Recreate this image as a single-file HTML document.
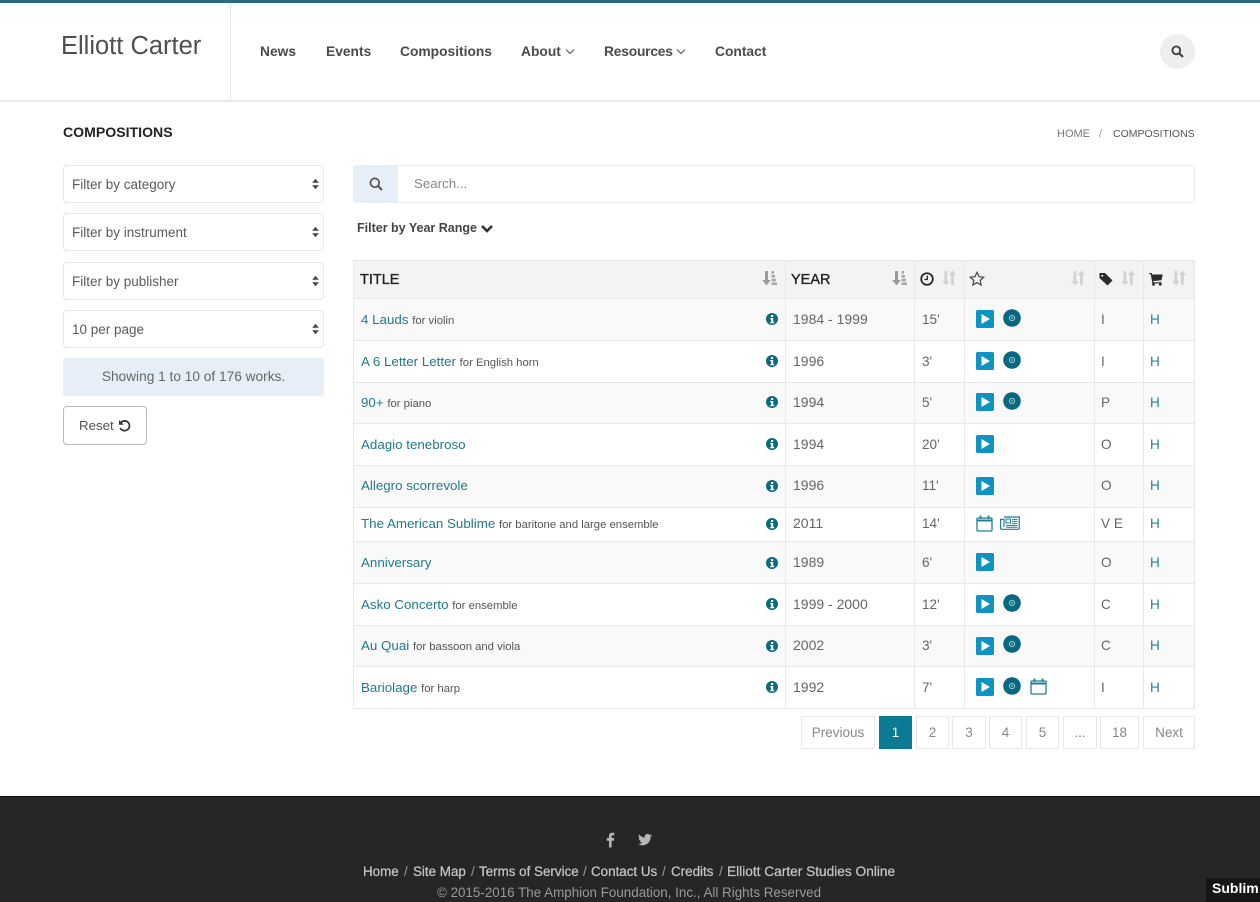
<!DOCTYPE html>
<html lang="en"><head><meta charset="utf-8"><title>Compositions</title>
<style>
html,body{margin:0;padding:0;background:#fff}
body{width:1260px;height:902px;overflow:hidden;position:relative}
#w{position:absolute;left:0;top:0;width:1260px;height:902px;overflow:hidden;background:#fff;font-family:"Liberation Sans",Arial,sans-serif;color:#555;filter:blur(.3px)}
.a,.t,.i{position:absolute}
.t{white-space:nowrap;line-height:20px;height:20px;margin-top:1px}
a{color:#1f7a8c;text-decoration:none}
.nav{font-weight:bold;font-size:13.8px;color:#4a4a4a;top:41px}
.box{position:absolute;box-sizing:border-box;border:1px solid #e6e6e6;border-radius:4px;background:#fff}
.sel{left:63px;width:261px;height:38px}
.sel .t{left:8px;top:8px;font-size:13.5px;color:#5a5a5a}
.sel svg{position:absolute;left:248px;top:12px}
.hl{position:absolute;left:353px;width:842px;height:1px;background:#e8e8e8}
.vl{position:absolute;top:260px;width:1px;height:449px;background:#e8e8e8}
.st{position:absolute;left:354px;width:840px}
.l{left:361px;font-size:13.35px;color:#777}
.l a{color:#1f7a8c}.l span{font-size:11.3px;color:#555}
.y{left:793px;font-size:14px;color:#666;margin-top:0}
.d{left:922px;font-size:13.6px;color:#666}
.c{left:1101px;font-size:13.6px;color:#666}
.h{left:1150px;font-size:13.6px;color:#2a8296}
.th{font-size:14.5px;color:#222;-webkit-text-stroke:.35px #222;top:269px}
.pg{position:absolute;top:716px;height:33px;box-sizing:border-box;border:1px solid #e8e8e8;text-align:center;line-height:31px;font-size:13.5px;color:#888;background:#fff}
.i{display:block}
.f{top:861px;font-size:13.4px;color:#c4c4c4;-webkit-text-stroke:.25px #c4c4c4}
.s{top:861px;font-size:13.4px;color:#999}
</style></head><body><div id="w">
<svg width="0" height="0" style="position:absolute">
<defs>
<symbol id="play" viewBox="0 0 18 18"><rect width="18" height="18" rx="1.6" fill="#0f93c3"/><path d="M5.500 4 14 9 5.500 14Z" fill="#fff"/></symbol>
<symbol id="disc" viewBox="0 0 18 18"><circle cx="9" cy="9" r="8.8" fill="#07697e"/><circle cx="9" cy="9" r="2.6" fill="none" stroke="#9fc6cf" stroke-width="1"/><circle cx="9" cy="9" r=".9" fill="#9fc6cf"/></symbol>
<symbol id="info" viewBox="0 0 12 12"><circle cx="6" cy="6" r="6" fill="#0b6b80"/><rect x="5" y="2" width="2.2" height="2" fill="#fff"/><path d="M4.200 5h3v4h1v1.200H4.200V9h1V6.200h-1Z" fill="#fff"/></symbol>
<symbol id="cal" viewBox="0 0 17 17"><rect x="1" y="3" width="15" height="13" rx="1" fill="none" stroke="#1f7f93" stroke-width="1.300"/><path d="M1 5.500h15" stroke="#1f7f93" stroke-width="2"/><path d="M4.500 .5v3.400M12.500 .5v3.400" stroke="#1f7f93" stroke-width="1.800"/></symbol>
<symbol id="news" viewBox="0 0 20 14"><path d="M4 1h15.300v11a1.300 1.300 0 0 1-1.300 1.300H2a1.400 1.400 0 0 1-1.400-1.400V3.400H4V11" fill="none" stroke="#1f7f93" stroke-width="1.200"/><rect x="6" y="3" width="4.500" height="4" fill="none" stroke="#1f7f93"/><path d="M12 3.400h5.500M12 5.400h5.500M12 7.400h5.500M6 9.400h11.500M6 11.200h11.500" stroke="#1f7f93"/></symbol>
<symbol id="sa" viewBox="0 0 16 16"><path d="M4 1h3v9h2.800L5.500 15.500 1.200 10H4Z" fill="#9a9a9a"/><path d="M10.500 1h2.500v2.800h-2.500ZM10.500 5h3.500v2.500h-3.500ZM10.500 8.700h4.500v2.500h-4.500ZM10.500 12.400h5.500v2.600h-5.500Z" fill="#a8a8a8"/></symbol>
<symbol id="so" viewBox="0 0 16 16"><path d="M3.500 1h2.800v10h2.500L5 15.500 1.200 11h2.300Z" fill="#d2d2d2"/><path d="M10 15V5H7.600L11.400.5 15.200 5H12.800V15Z" fill="#d2d2d2"/></symbol>
<symbol id="sel" viewBox="0 0 7 12"><path d="M3.500 .8 6.800 4.800H.2ZM3.500 11.200.2 7.200H6.800Z" fill="#444"/></symbol>
</defs></svg>

<!-- header -->
<div class="a" style="left:0;top:0;width:1260px;height:3px;background:#2a6b7c"></div>
<div class="a" style="left:0;top:100px;width:1260px;height:2px;background:#e8e8e8"></div>
<div class="a" style="left:230px;top:3px;width:1px;height:97px;background:#e6e6e6"></div>
<div class="t" style="left:61px;top:35px;font-size:25.500px;color:#505050">Elliott Carter</div>
<div class="t nav" style="left:260px">News</div>
<div class="t nav" style="left:326px">Events</div>
<div class="t nav" style="left:400px">Compositions</div>
<div class="t nav" style="left:521px">About</div>
<svg class="i" style="left:565px;top:48px" width="10" height="7"><path d="M1 1.500 5 5.500 9 1.500" fill="none" stroke="#555" stroke-width="1.100"/></svg>
<div class="t nav" style="left:604px;letter-spacing:-.2px">Resources</div>
<svg class="i" style="left:676px;top:48px" width="10" height="7"><path d="M1 1.500 5 5.500 9 1.500" fill="none" stroke="#555" stroke-width="1.100"/></svg>
<div class="t nav" style="left:715px">Contact</div>
<div class="a" style="left:1160px;top:34px;width:35px;height:35px;border-radius:50%;background:#eee"></div>
<svg class="i" style="left:1171px;top:45px" width="13" height="13"><circle cx="5.300" cy="5.300" r="3.900" fill="none" stroke="#444" stroke-width="1.900"/><path d="M8.200 8.200 12 12" stroke="#444" stroke-width="2.200"/></svg>

<div class="t" style="left:63px;top:121px;font-size:14.100px;font-weight:bold;color:#222">COMPOSITIONS</div>
<div class="t" style="left:1057px;top:123px;font-size:11px;color:#777">HOME</div>
<div class="t" style="left:1099px;top:123px;font-size:11px;color:#999">/</div>
<div class="t" style="left:1113px;top:123px;font-size:10.500px;color:#555">COMPOSITIONS</div>

<!-- sidebar -->
<div class="box sel" style="top:165px"><div class="t">Filter by category</div><svg width="7" height="12"><use href="#sel"/></svg></div>
<div class="box sel" style="top:213px"><div class="t">Filter by instrument</div><svg width="7" height="12"><use href="#sel"/></svg></div>
<div class="box sel" style="top:262px"><div class="t">Filter by publisher</div><svg width="7" height="12"><use href="#sel"/></svg></div>
<div class="box sel" style="top:310px"><div class="t">10 per page</div><svg width="7" height="12"><use href="#sel"/></svg></div>
<div class="a" style="left:63px;top:358px;width:261px;height:38px;border-radius:3px;background:#e6eef7"></div>
<div class="t" style="left:63px;width:261px;text-align:center;top:366px;font-size:13.700px;color:#666">Showing 1 to 10 of 176 works.</div>
<div class="box" style="left:63px;top:406px;width:84px;height:39px;border-color:#bbb"></div>
<div class="t" style="left:79px;top:415px;font-size:13.300px;color:#555">Reset</div>
<svg class="i" style="left:118px;top:419px" width="13" height="13"><path d="M3 3.400A4.900 4.900 0 1 1 2.200 9" fill="none" stroke="#333" stroke-width="1.700"/><path d="M1 1v4.800h4.800Z" fill="#333"/></svg>

<!-- search -->
<div class="box" style="left:353px;top:165px;width:842px;height:38px;border-color:#ececec"></div>
<div class="a" style="left:353px;top:165px;width:45px;height:38px;background:#e6eef7;border-radius:4px 0 0 4px"></div>
<svg class="i" style="left:369px;top:177px" width="14" height="14"><circle cx="5.800" cy="5.800" r="4.400" fill="none" stroke="#555" stroke-width="1.700"/><path d="M9 9 13 13" stroke="#555" stroke-width="2"/></svg>
<div class="t" style="left:414px;top:173px;font-size:13.300px;color:#888">Search...</div>
<div class="t" style="left:357px;top:217px;font-size:12.500px;font-weight:bold;color:#444">Filter by Year Range</div>
<svg class="i" style="left:480px;top:224px" width="14" height="10"><path d="M2 2 7 7 12 2" fill="none" stroke="#333" stroke-width="2.600"/></svg>

<!-- table -->
<div class="a" style="left:354px;top:261px;width:840px;height:37px;background:#f3f3f3"></div>
<div class="st" style="top:299px;height:41px;background:#f9f9f9"></div>
<div class="st" style="top:383px;height:40px;background:#f9f9f9"></div>
<div class="st" style="top:466px;height:41px;background:#f9f9f9"></div>
<div class="st" style="top:542px;height:41px;background:#f9f9f9"></div>
<div class="st" style="top:626px;height:40px;background:#f9f9f9"></div>
<div class="hl" style="top:260px"></div><div class="hl" style="top:298px"></div><div class="hl" style="top:340px"></div><div class="hl" style="top:382px"></div><div class="hl" style="top:423px"></div><div class="hl" style="top:465px"></div><div class="hl" style="top:507px"></div><div class="hl" style="top:541px"></div><div class="hl" style="top:583px"></div><div class="hl" style="top:625px"></div><div class="hl" style="top:666px"></div><div class="hl" style="top:708px"></div>
<div class="vl" style="left:353px"></div><div class="vl" style="left:785px"></div><div class="vl" style="left:914px"></div><div class="vl" style="left:964px"></div><div class="vl" style="left:1094px"></div><div class="vl" style="left:1143px"></div><div class="vl" style="left:1194px"></div>

<div class="t th" style="left:360px">TITLE</div>
<svg class="i" style="left:761px;top:270px" width="16" height="16"><use href="#sa"/></svg>
<div class="t th" style="left:791px">YEAR</div>
<svg class="i" style="left:891px;top:270px" width="16" height="16"><use href="#sa"/></svg>
<svg class="i" style="left:920px;top:272px" width="14" height="14"><circle cx="7" cy="7" r="5.800" fill="none" stroke="#222" stroke-width="1.700"/><path d="M7.300 3.500V7.500H4.500" fill="none" stroke="#222" stroke-width="1.300"/></svg>
<svg class="i" style="left:941px;top:270px" width="16" height="16"><use href="#so"/></svg>
<svg class="i" style="left:969px;top:271px" width="16" height="15"><path d="M8 1.300 10 5.700 14.800 6.200 11.200 9.400 12.200 14 8 11.600 3.800 14 4.800 9.400 1.200 6.200 6 5.700Z" fill="none" stroke="#444" stroke-width="1.200"/></svg>
<svg class="i" style="left:1070px;top:270px" width="16" height="16"><use href="#so"/></svg>
<svg class="i" style="left:1099px;top:272px" width="14" height="14"><path d="M.5 1h5.500l7.500 7.500-5 5L.5 6Z" fill="#2b2b2b"/><circle cx="3.300" cy="3.800" r="1" fill="#f3f3f3"/></svg>
<svg class="i" style="left:1120px;top:270px" width="16" height="16"><use href="#so"/></svg>
<svg class="i" style="left:1149px;top:272px" width="14" height="14"><path d="M.3 1h2.500l.5 1.500h10.400l-1.200 5.800-8.500.8.300 1.100h8.200v1.200H3.300L1.800 2.200H.3Z" fill="#2b2b2b"/><circle cx="4.500" cy="12.300" r="1.400" fill="#2b2b2b"/><circle cx="11.300" cy="12.300" r="1.400" fill="#2b2b2b"/></svg>
<svg class="i" style="left:1171px;top:270px" width="16" height="16"><use href="#so"/></svg>

<!-- row 1 -->
<div class="t l" style="top:309px"><a>4 Lauds</a> <span>for violin</span></div><svg class="i" style="left:766px;top:313px" width="12" height="12"><use href="#info"/></svg><div class="t y" style="top:309px">1984 - 1999</div><div class="t d" style="top:309px">15'</div><svg class="i" style="left:976px;top:310px" width="18" height="18"><use href="#play"/></svg><svg class="i" style="left:1003px;top:309px" width="18" height="18"><use href="#disc"/></svg><div class="t c" style="top:309px">I</div><div class="t h" style="top:309px">H</div>
<!-- row 2 -->
<div class="t l" style="top:351px"><a>A 6 Letter Letter</a> <span>for English horn</span></div><svg class="i" style="left:766px;top:355px" width="12" height="12"><use href="#info"/></svg><div class="t y" style="top:351px">1996</div><div class="t d" style="top:351px">3'</div><svg class="i" style="left:976px;top:352px" width="18" height="18"><use href="#play"/></svg><svg class="i" style="left:1003px;top:351px" width="18" height="18"><use href="#disc"/></svg><div class="t c" style="top:351px">I</div><div class="t h" style="top:351px">H</div>
<!-- row 3 -->
<div class="t l" style="top:392px"><a>90+</a> <span>for piano</span></div><svg class="i" style="left:766px;top:396px" width="12" height="12"><use href="#info"/></svg><div class="t y" style="top:392px">1994</div><div class="t d" style="top:392px">5'</div><svg class="i" style="left:976px;top:393px" width="18" height="18"><use href="#play"/></svg><svg class="i" style="left:1003px;top:392px" width="18" height="18"><use href="#disc"/></svg><div class="t c" style="top:392px">P</div><div class="t h" style="top:392px">H</div>
<!-- row 4 -->
<div class="t l" style="top:434px"><a>Adagio tenebroso</a></div><svg class="i" style="left:766px;top:438px" width="12" height="12"><use href="#info"/></svg><div class="t y" style="top:434px">1994</div><div class="t d" style="top:434px">20'</div><svg class="i" style="left:976px;top:435px" width="18" height="18"><use href="#play"/></svg><div class="t c" style="top:434px">O</div><div class="t h" style="top:434px">H</div>
<!-- row 5 -->
<div class="t l" style="top:475px"><a>Allegro scorrevole</a></div><svg class="i" style="left:766px;top:480px" width="12" height="12"><use href="#info"/></svg><div class="t y" style="top:475px">1996</div><div class="t d" style="top:475px">11'</div><svg class="i" style="left:976px;top:477px" width="18" height="18"><use href="#play"/></svg><div class="t c" style="top:475px">O</div><div class="t h" style="top:475px">H</div>
<!-- row 6 -->
<div class="t l" style="top:513px"><a>The American Sublime</a> <span>for baritone and large ensemble</span></div><svg class="i" style="left:766px;top:518px" width="12" height="12"><use href="#info"/></svg><div class="t y" style="top:513px">2011</div><div class="t d" style="top:513px">14'</div><svg class="i" style="left:976px;top:515px" width="17" height="17"><use href="#cal"/></svg><svg class="i" style="left:1000px;top:516px" width="20" height="14"><use href="#news"/></svg><div class="t c" style="top:513px">V E</div><div class="t h" style="top:513px">H</div>
<!-- row 7 -->
<div class="t l" style="top:552px"><a>Anniversary</a></div><svg class="i" style="left:766px;top:557px" width="12" height="12"><use href="#info"/></svg><div class="t y" style="top:552px">1989</div><div class="t d" style="top:552px">6'</div><svg class="i" style="left:976px;top:553px" width="18" height="18"><use href="#play"/></svg><div class="t c" style="top:552px">O</div><div class="t h" style="top:552px">H</div>
<!-- row 8 -->
<div class="t l" style="top:594px"><a>Asko Concerto</a> <span>for ensemble</span></div><svg class="i" style="left:766px;top:598px" width="12" height="12"><use href="#info"/></svg><div class="t y" style="top:594px">1999 - 2000</div><div class="t d" style="top:594px">12'</div><svg class="i" style="left:976px;top:595px" width="18" height="18"><use href="#play"/></svg><svg class="i" style="left:1003px;top:594px" width="18" height="18"><use href="#disc"/></svg><div class="t c" style="top:594px">C</div><div class="t h" style="top:594px">H</div>
<!-- row 9 -->
<div class="t l" style="top:635px"><a>Au Quai</a> <span>for bassoon and viola</span></div><svg class="i" style="left:766px;top:640px" width="12" height="12"><use href="#info"/></svg><div class="t y" style="top:635px">2002</div><div class="t d" style="top:635px">3'</div><svg class="i" style="left:976px;top:637px" width="18" height="18"><use href="#play"/></svg><svg class="i" style="left:1003px;top:635px" width="18" height="18"><use href="#disc"/></svg><div class="t c" style="top:635px">C</div><div class="t h" style="top:635px">H</div>
<!-- row 10 -->
<div class="t l" style="top:677px"><a>Bariolage</a> <span>for harp</span></div><svg class="i" style="left:766px;top:681px" width="12" height="12"><use href="#info"/></svg><div class="t y" style="top:677px">1992</div><div class="t d" style="top:677px">7'</div><svg class="i" style="left:976px;top:678px" width="18" height="18"><use href="#play"/></svg><svg class="i" style="left:1003px;top:677px" width="18" height="18"><use href="#disc"/></svg><svg class="i" style="left:1030px;top:678px" width="17" height="17"><use href="#cal"/></svg><div class="t c" style="top:677px">I</div><div class="t h" style="top:677px">H</div>

<!-- pagination -->
<div class="pg" style="left:801px;width:74px">Previous</div>
<div class="pg" style="left:879px;width:33px;background:#0b7a93;border-color:#0b7a93;color:#fff">1</div>
<div class="pg" style="left:916px;width:33px">2</div>
<div class="pg" style="left:952px;width:34px">3</div>
<div class="pg" style="left:989px;width:33px">4</div>
<div class="pg" style="left:1026px;width:33px">5</div>
<div class="pg" style="left:1063px;width:34px">...</div>
<div class="pg" style="left:1100px;width:39px">18</div>
<div class="pg" style="left:1143px;width:52px">Next</div>

<!-- footer -->
<div class="a" style="left:0;top:796px;width:1260px;height:106px;background:#262626;border-top:1px solid #111;box-sizing:border-box"></div>
<svg class="i" style="left:606px;top:832px" width="11" height="16"><path d="M3 15.500V8.800H.8V6H3V4C3 1.800 4.300.7 6.300.7c.9 0 1.700.1 2 .1v2.500H6.900C5.800 3.300 5.600 3.800 5.600 4.600V6h2.600l-.4 2.800H5.600v6.700Z" fill="#b5b5b5"/></svg>
<svg class="i" style="left:638px;top:833px" width="14" height="13"><path d="M13.800 2.300c-.5.200-1 .4-1.600.4.600-.3 1-.9 1.200-1.500-.5.300-1.100.5-1.800.7A2.800 2.800 0 0 0 6.800 4.500 8 8 0 0 1 1 1.500a2.800 2.800 0 0 0 .9 3.800c-.5 0-.9-.1-1.300-.4 0 1.400 1 2.500 2.300 2.800-.4.100-.8.100-1.300 0 .4 1.100 1.400 1.900 2.600 2a5.700 5.700 0 0 1-4.200 1.200A8 8 0 0 0 12.500 4c.5-.4 1-.9 1.300-1.700Z" fill="#b5b5b5"/></svg>
<div class="t f" style="left:363px">Home</div><div class="t s" style="left:404px">/</div>
<div class="t f" style="left:413px">Site Map</div><div class="t s" style="left:471px">/</div>
<div class="t f" style="left:479px">Terms of Service</div><div class="t s" style="left:583px">/</div>
<div class="t f" style="left:591px">Contact Us</div><div class="t s" style="left:662px">/</div>
<div class="t f" style="left:671px">Credits</div><div class="t s" style="left:719px">/</div>
<div class="t f" style="left:727px;font-size:13.700px">Elliott Carter Studies Online</div>
<div class="t" style="left:437px;top:882px;font-size:13.400px;color:#999">© 2015-2016 The Amphion Foundation, Inc., All Rights Reserved</div>
<div class="a" style="left:1206px;top:878px;width:54px;height:24px;background:#161616"></div>
<div class="t" style="left:1212px;top:877px;font-size:14px;font-weight:bold;color:#fff">Sublim</div>
</div></body></html>
